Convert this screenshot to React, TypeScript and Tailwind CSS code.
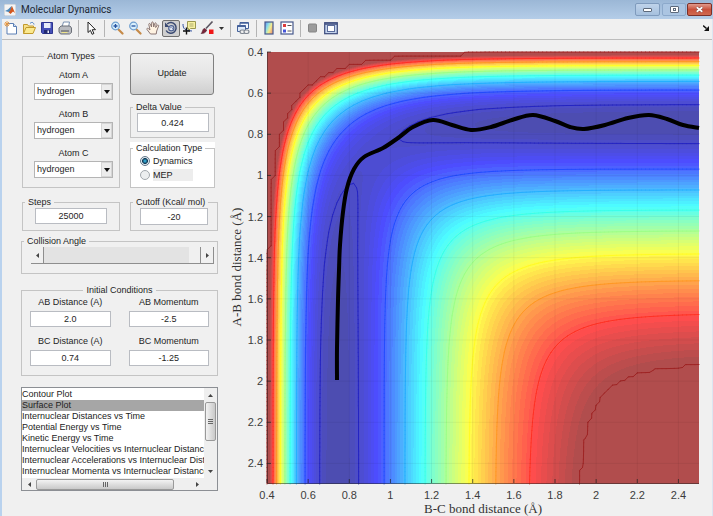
import React, { useMemo, useState } from 'react';

const ATOMS = ['hydrogen', 'deuterium', 'fluorine', 'chlorine'];

const PLOTS = [
  'Contour Plot',
  'Surface Plot',
  'Internuclear Distances vs Time',
  'Potential Energy vs Time',
  'Kinetic Energy vs Time',
  'Internuclear Velocities vs Internuclear Distance',
  'Internuclear Accelerations vs Internuclear Distance',
  'Internuclear Momenta vs Internuclear Distance',
];

// plot box in svg units
const X0 = 267;
const Y0 = 52;
const SIZE = 432;
const UNIT = SIZE / 2.1;

// LEPS surface for H + H2, kcal/mol and angstrom
const D = 109.4;
const BETA = 1.942;
const R0 = 0.7417;
const SATO = 0.19;
const CUTOFF = -21.8;

const pair = (r: number) => {
  const e = Math.exp(-BETA * (r - R0));
  const s = D * (e * e - 2 * e);
  const t = (D / 2) * (e * e + 2 * e) * ((1 - SATO) / (1 + SATO));
  return [(s + t) / 2, (s - t) / 2];
};

const energy = (bc: number, ab: number) => {
  const [q1, j1] = pair(ab);
  const [q2, j2] = pair(bc);
  const [q3, j3] = pair(ab + bc);
  const j = Math.sqrt(((j1 - j2) ** 2 + (j2 - j3) ** 2 + (j1 - j3) ** 2) / 2);
  return Math.min(CUTOFF, q1 + q2 + q3 - j);
};

const jet = (v: number, alpha: number) => {
  const t = 0.0156 + 0.969 * Math.min(1, Math.max(0, v));
  const ch = (c: number) => {
    const k = Math.min(1, Math.max(0, 1.5 - Math.abs(4 * t - c)));
    return Math.round(255 * (k * alpha + 1 - alpha));
  };
  return `rgb(${ch(3)},${ch(2)},${ch(1)})`;
};

const norm = (v: number) => (v + D) / (CUTOFF + D);

// one path per colour, made of horizontal runs
const buildBands = () => {
  const count = 64;
  const paths: string[] = Array(count).fill('');
  for (let y = 0; y < SIZE; y++) {
    let start = 0;
    let last = -1;
    for (let x = 0; x <= SIZE; x++) {
      const v = x < SIZE ? norm(energy(0.4 + (x + 0.5) / UNIT, 0.4 + (y + 0.5) / UNIT)) : -1;
      const band = x < SIZE ? Math.max(0, Math.min(count - 1, Math.floor(v * count))) : -1;
      if (band !== last) {
        if (last >= 0) paths[last] += `M${X0 + start} ${Y0 + y}h${x - start}v1h${start - x}z`;
        start = x;
        last = band;
      }
    }
  }
  return paths.map((d, i) => ({ d, fill: jet(i / (count - 1), 0.7) }));
};

const LEVELS = [-105.7, -95.4, -85, -74.7, -64.4, -54.1, -43.7, -33, CUTOFF - 0.02];

const buildLines = () => {
  const n = 105;
  const grid: number[][] = [];
  for (let j = 0; j <= n; j++) {
    grid.push([]);
    for (let i = 0; i <= n; i++) grid[j].push(energy(0.4 + i * 0.02, 0.4 + j * 0.02));
  }
  const step = SIZE / n;
  return LEVELS.map((level) => {
    let d = '';
    for (let j = 0; j < n; j++) {
      for (let i = 0; i < n; i++) {
        const corners = [
          [i, j],
          [i + 1, j],
          [i + 1, j + 1],
          [i, j + 1],
        ];
        const pts: string[] = [];
        for (let k = 0; k < 4; k++) {
          const [ax, ay] = corners[k];
          const [bx, by] = corners[(k + 1) % 4];
          const a = grid[ay][ax];
          const b = grid[by][bx];
          if (a > level !== b > level) {
            const t = (level - a) / (b - a);
            const px = X0 + (ax + (bx - ax) * t) * step;
            const py = Y0 + (ay + (by - ay) * t) * step;
            pts.push(`${px.toFixed(1)} ${py.toFixed(1)}`);
          }
        }
        if (pts.length >= 2) d += `M${pts[0]}L${pts[1]}`;
      }
    }
    return { d, stroke: jet(norm(level), 0.86) };
  });
};

const TRAJECTORY = [
  [337, 380], [337, 348], [338, 300], [339, 270], [340, 245], [343, 212], [347, 188],
  [354, 169], [364, 157], [383, 148], [398, 138], [413, 127], [433, 120],
  [452, 125], [471, 130], [491, 127], [512, 120], [533, 115],
  [555, 121], [570, 127], [584, 129], [605, 125], [628, 118], [649, 115],
  [667, 119], [683, 125], [699, 128],
];

const smooth = (p: number[][]) => {
  let d = `M${p[0][0]} ${p[0][1]}`;
  for (let i = 0; i < p.length - 1; i++) {
    const a = p[i - 1] || p[i];
    const b = p[i];
    const c = p[i + 1];
    const e = p[i + 2] || c;
    d += `C${b[0] + (c[0] - a[0]) / 6} ${b[1] + (c[1] - a[1]) / 6} ${c[0] - (e[0] - b[0]) / 6} ${c[1] - (e[1] - b[1]) / 6} ${c[0]} ${c[1]}`;
  }
  return d;
};

const TICKS = ['0.4', '0.6', '0.8', '1', '1.2', '1.4', '1.6', '1.8', '2', '2.2', '2.4'];

const SurfacePlot = () => {
  const bands = useMemo(buildBands, []);
  const lines = useMemo(buildLines, []);
  const end = X0 + SIZE;
  const bottom = Y0 + SIZE - 1;

  return (
    <svg viewBox="228 40 484 476" className="block w-full" role="img" aria-label="Potential energy surface">
      <g shapeRendering="crispEdges">
        {bands.map((b, i) => (
          <path key={i} d={b.d} fill={b.fill} />
        ))}
      </g>
      {lines.map((l, i) => (
        <path key={i} d={l.d} stroke={l.stroke} strokeWidth="1" strokeLinecap="round" fill="none" />
      ))}
      <g stroke="#000" strokeOpacity="0.05">
        {TICKS.slice(1).map((t) => {
          const o = (Number(t) - 0.4) * UNIT;
          return <path key={t} d={`M${X0 + o} ${Y0}V${bottom}M${X0} ${Y0 + o}H${end}`} />;
        })}
      </g>
      <g stroke="#222" strokeOpacity="0.7">
        <path d={`M${X0 + 0.5} ${Y0}V${bottom + 0.5}H${end}`} fill="none" strokeOpacity="0.5" />
        {TICKS.map((t) => {
          const o = (Number(t) - 0.4) * UNIT;
          return <path key={t} d={`M${X0 + o} ${bottom}v-4M${X0} ${Y0 + o}h4`} />;
        })}
      </g>
      <path d={smooth(TRAJECTORY)} stroke="#000" strokeWidth="4" fill="none" />
      <g className="font-['Liberation_Sans'] text-[11px]" fill="#3c3c3c">
        {TICKS.map((t) => {
          const o = (Number(t) - 0.4) * UNIT;
          return (
            <React.Fragment key={t}>
              <text x={X0 + o} y="499" textAnchor="middle">{t}</text>
              <text x="263" y={Y0 + o + 4} textAnchor="end">{t}</text>
            </React.Fragment>
          );
        })}
      </g>
      <g className="font-['Liberation_Serif'] text-[13px]" fill="#333" textAnchor="middle">
        <text x="483" y="513">B-C bond distance (Å)</text>
        <text transform="translate(241 267) rotate(-90)">A-B bond distance (Å)</text>
      </g>
    </svg>
  );
};

const ToolButton = ({ label, pressed, children }: { label: string; pressed?: boolean; children: React.ReactNode }) => (
  <button
    type="button"
    aria-label={label}
    className={
      pressed
        ? 'flex h-[17px] w-[18px] items-center justify-center rounded-[2px] border border-[#6f6f6f] bg-[#cfcfcf]'
        : 'flex h-[17px] w-[18px] items-center justify-center'
    }
  >
    <svg viewBox="0 0 14 14" className="size-[14px] shrink-0">{children}</svg>
  </button>
);

const Separator = () => (
  <div className="flex h-[17px] w-2 justify-center">
    <div className="w-px bg-[#b4b4b4]" />
  </div>
);

const Toolbar = () => (
  <div className="flex h-[21px] items-center border-b border-[#bdbdbd] bg-[#f0f0f0] pb-[2px]">
    <ToolButton label="New Figure">
      <path d="M3 2.500h6.500l3 3v7.500h-9.500z" fill="#fff" stroke="#5b7fb4" />
      <path d="M9.500 2.500v3h3" fill="#d7e4f5" stroke="#5b7fb4" />
      <path d="M3 0v6M0 3h6M1 1l4 4M5 1L1 5" stroke="#e8953a" strokeWidth="0.900" />
    </ToolButton>
    <ToolButton label="Open File">
      <path d="M1.500 12.500v-9h4l1 1.500h5v2" fill="#f7e08a" stroke="#c29a2c" />
      <path d="M1.500 12.500l2.500-6h9.500l-2.500 6z" fill="#fbe98e" stroke="#c29a2c" />
      <path d="M8 2.500c2-2 3.500-1 4 1" fill="none" stroke="#4a7fc0" />
    </ToolButton>
    <ToolButton label="Save Figure">
      <path d="M1.500 1.500h11v11h-10l-1-1z" fill="#4550b8" stroke="#2d3590" />
      <path d="M4 2h6.500v5H4z" fill="#e8edfa" />
      <path d="M4 9h6v3.500H4z" fill="#222a70" />
      <path d="M7.500 9.500h1.500v2.500H7.500z" fill="#e8edfa" />
    </ToolButton>
    <ToolButton label="Print Figure">
      <path d="M4 6l1.500-5h6L10.500 6z" fill="#fff" stroke="#7890b0" />
      <path d="M1 7l2-2h9l1.500 2v4.500l-2 1.500H2.500L1 11z" fill="#b9bbc0" stroke="#6c7078" />
      <path d="M3 10h8" stroke="#555" />
      <path d="M3.500 11.500h6" stroke="#eee58a" />
    </ToolButton>
    <Separator />
    <ToolButton label="Edit Plot">
      <path d="M4 1v10.500l2.400-2.200 1.700 4 1.800-.8-1.700-3.800H11.500z" fill="#fff" stroke="#222" />
    </ToolButton>
    <Separator />
    <ToolButton label="Zoom In">
      <path d="M8.500 8.500l4 4" stroke="#c58a48" strokeWidth="2.200" strokeLinecap="round" />
      <circle cx="5.500" cy="5" r="3.800" fill="#d8effc" stroke="#6f9fd0" strokeWidth="1.200" />
      <path d="M3.500 5h4M5.500 3v4" stroke="#2552a0" strokeWidth="1.300" />
    </ToolButton>
    <ToolButton label="Zoom Out">
      <path d="M8.500 8.500l4 4" stroke="#c58a48" strokeWidth="2.200" strokeLinecap="round" />
      <circle cx="5.500" cy="5" r="3.800" fill="#d8effc" stroke="#6f9fd0" strokeWidth="1.200" />
      <path d="M3.500 5h4" stroke="#2552a0" strokeWidth="1.300" />
    </ToolButton>
    <ToolButton label="Pan">
      <path
        d="M4.500 13L1 8.500c-.6-1 .5-1.700 1.300-1L4 9 2.800 3.500c-.2-1.100 1.200-1.500 1.600-.3L5.500 6 5.700 1.800c0-1.200 1.500-1.200 1.600 0L7.700 6l1-3.500c.3-1.100 1.700-.8 1.500.3L9.700 6.500l1.500-2.200c.6-.9 1.800-.2 1.400.8L10.700 10l-.5 3z"
        fill="#fff3e2"
        stroke="#806a68"
        strokeWidth="0.900"
      />
    </ToolButton>
    <ToolButton label="Rotate 3D" pressed>
      <path d="M3.200 3A5.300 5.300 0 1 1 2.200 9.500" fill="none" stroke="#3a4a72" strokeWidth="1.500" />
      <path d="M1 1.500v4.500h4.500z" fill="#3a4a72" />
      <circle cx="7.300" cy="7.200" r="2.600" fill="#e3eaf6" stroke="#4d6292" strokeWidth="1.200" />
      <path d="M6 7l1.300-.8 1.300.8v1.200" fill="none" stroke="#4d6292" strokeWidth="0.700" />
    </ToolButton>
    <ToolButton label="Data Cursor">
      <path d="M5.500.5h8v7h-5l-2 2v-2h-1z" fill="#f7f0a0" stroke="#9b9750" />
      <path d="M7.500 3h4M7.500 5h4" stroke="#8c8c60" strokeWidth="0.700" />
      <path d="M1 3c0 5 2 6.500 9 7" fill="none" stroke="#3050a0" />
      <path d="M4.500 6.500v7M1 10h7" stroke="#111" strokeWidth="1.400" />
    </ToolButton>
    <ToolButton label="Brush">
      <path d="M12.500.5L6 7.500" stroke="#5a5560" strokeWidth="1.600" />
      <path d="M1 12.500c1.500-1 1.200-4 3.200-5.200L6.800 9C6 11.500 3.500 13 1 12.500z" fill="#7a2438" stroke="#4a2030" strokeWidth="0.500" />
      <path d="M9 8.500h4.500V13H9z" fill="#f01818" />
    </ToolButton>
    <button type="button" aria-label="Brush Options" className="flex h-[17px] w-[10px] items-center justify-center">
      <svg viewBox="0 0 5 3" className="h-[3px] w-[5px]"><path d="M0 0h5L2.500 3z" fill="#333" /></svg>
    </button>
    <Separator />
    <ToolButton label="Link Plot">
      <path d="M4 1.500h8.500v6H4z" fill="#f4f8ff" stroke="#44619a" />
      <path d="M1.500 4.500h8v6h-8z" fill="#dce8f8" stroke="#44619a" />
      <path d="M1.500 4.500h8v1.500h-8zM4 1.500h8.500v1.200H4z" fill="#44619a" />
      <rect x="4" y="9" width="5" height="3.500" rx="1.700" fill="#eee" stroke="#7d8590" strokeWidth="1.200" />
      <rect x="8" y="9" width="5" height="3.500" rx="1.700" fill="#eee" stroke="#7d8590" strokeWidth="1.200" />
    </ToolButton>
    <Separator />
    <ToolButton label="Insert Colorbar">
      <defs>
        <linearGradient id="bar" x1="0" y1="0" x2="1" y2="0.600">
          <stop offset="0" stopColor="#5f8ff0" />
          <stop offset="0.400" stopColor="#8ee0e8" />
          <stop offset="0.700" stopColor="#f3ec8c" />
          <stop offset="1" stopColor="#f0a878" />
        </linearGradient>
      </defs>
      <rect x="3" y="1" width="8" height="12" fill="url(#bar)" stroke="#46598c" strokeWidth="1.200" />
    </ToolButton>
    <ToolButton label="Insert Legend">
      <rect x="1" y="1" width="12" height="12" fill="#fff" stroke="#46598c" strokeWidth="1.200" />
      <path d="M3 3h3v3H3z" fill="#dc3c3c" />
      <path d="M3 8.500h3v3H3z" fill="#4554d8" />
      <path d="M7.500 4.500h4M7.500 10h4" stroke="#555" />
    </ToolButton>
    <Separator />
    <ToolButton label="Hide Plot Tools">
      <rect x="2.500" y="3" width="8" height="8" rx="1" fill="#9b9b9b" stroke="#858585" />
    </ToolButton>
    <ToolButton label="Show Plot Tools">
      <rect x="0.700" y="1.700" width="12.600" height="11" fill="#c4d3ec" stroke="#3b4a7c" strokeWidth="1.200" />
      <path d="M1 3h12" stroke="#3b4a7c" strokeWidth="1.500" />
      <rect x="3.500" y="4.500" width="7" height="6" fill="#fff" stroke="#5a6c9c" />
    </ToolButton>
    <button type="button" aria-label="Dock Figure" className="mr-[2px] ml-auto flex h-[17px] w-2 items-center justify-center">
      <svg viewBox="0 0 6 6" className="size-[6px]">
        <path d="M0 .5l3.500 3" stroke="#111" strokeWidth="1.500" />
        <path d="M6 1v5H1z" fill="#111" />
      </svg>
    </button>
  </div>
);

const TitleBar = () => (
  <header className="flex h-[19px] items-center bg-linear-to-b from-[#9bb7d6] to-[#b4cde8] pl-1">
    <svg viewBox="0 0 12 12" className="size-3">
      <rect width="12" height="12" fill="#f4f4f4" stroke="#8a9bb0" strokeWidth="0.600" />
      <path d="M1 7l3-1.500L6.500 3 8 2 6 9 4.500 8z" fill="#4a86b8" />
      <path d="M8 2l3 7-2-1.500L6.500 10 4.500 8C6.500 7.500 7 4 8 2z" fill="#d4561c" />
    </svg>
    <h1 className="ml-[5px] font-['Roboto'] text-[10px] leading-4 text-[#1c2733]">Molecular Dynamics</h1>
    <div className="mr-px ml-auto flex items-center">
      <button type="button" aria-label="Minimize" className="mr-[2px] flex h-[13px] w-[25px] items-center justify-center rounded-[2px] border border-[#7f9bbd] bg-linear-to-b from-[#bfd3ea] to-[#a5c0de]">
        <span className="h-[4px] w-[9px] rounded-[1px] border border-[#5d6a7c] bg-white" />
      </button>
      <button type="button" aria-label="Maximize" className="mr-px flex h-[13px] w-[24px] items-center justify-center rounded-[2px] border border-[#8ca9cb] bg-[#abc5e2]">
        <span className="flex h-[7px] w-[9px] items-center justify-center rounded-[1px] border border-[#5d6a7c] bg-white">
          <span className="h-[3px] w-[3px] border border-[#5d6a7c]" />
        </span>
      </button>
      <button type="button" aria-label="Close" className="flex h-[13px] w-[25px] items-center justify-center rounded-[2px] border border-[#7c3028] bg-linear-to-b from-[#e09a8c] via-[#c9513c] to-[#cf6a50]">
        <svg viewBox="0 0 8 6" className="h-[7px] w-[9px]">
          <path d="M1.500 1l5 4M6.500 1l-5 4" stroke="#6d3a38" strokeWidth="2.400" />
          <path d="M1.500 1l5 4M6.500 1l-5 4" stroke="#fff" strokeWidth="1.500" />
        </svg>
      </button>
    </div>
  </header>
);

const Panel = ({ title, center, className = '', children }: { title: string; center?: boolean; className?: string; children: React.ReactNode }) => (
  <fieldset className={`min-w-0 border border-[#c4c4c4] ${className}`}>
    <legend className={center ? 'mx-auto px-[3px] leading-3' : 'ml-[2px] px-[3px] leading-3'}>{title}</legend>
    {children}
  </fieldset>
);

const NumberBox = ({ label, value, className }: { label: string; value: string; className: string }) => (
  <input
    type="text"
    aria-label={label}
    defaultValue={value}
    className={`block border border-[#b9bcc2] bg-white text-center outline-none ${className}`}
  />
);

const AtomSelect = ({ name }: { name: string }) => (
  <div className="flex flex-col gap-[2px]">
    <label htmlFor={name} className="text-center leading-3">{`Atom ${name}`}</label>
    <div className="relative">
      <select id={name} className="block h-[17px] w-full appearance-none border border-[#b4b4b4] bg-white pl-[2px] outline-none">
        {ATOMS.map((a) => (
          <option key={a}>{a}</option>
        ))}
      </select>
      <span className="pointer-events-none absolute inset-y-px right-px flex w-[11px] items-center justify-center border border-[#d5d5d5] bg-[#ececec]">
        <svg viewBox="0 0 6 4" className="h-1 w-[6px] shrink-0"><path d="M0 0h6L3 4z" fill="#111" /></svg>
      </span>
    </div>
  </div>
);

const CalcRadio = ({ label, checked, onChange }: { label: string; checked: boolean; onChange: () => void }) => (
  <label className="flex h-[14px] items-center gap-[3px]">
    <input
      type="radio"
      name="calculation"
      checked={checked}
      onChange={onChange}
      className="size-[10px] appearance-none rounded-full border border-[#a3a8ad] bg-[#eceeef] checked:border-[#63788a] checked:bg-[radial-gradient(circle,#38c6f4_0,#143c58_45%,#dfe9ef_60%)]"
    />
    <span className={checked ? 'leading-3' : 'w-[40px] bg-[#ededed] leading-3'}>{label}</span>
  </label>
);

const Arrow = ({ d }: { d: string }) => (
  <svg viewBox="0 0 5 5" className="size-[5px] shrink-0"><path d={d} fill="#444" /></svg>
);

const Field = ({ label, value }: { label: string; value: string }) => (
  <label className="flex flex-col gap-[3px]">
    <span className="text-center leading-3">{label}</span>
    <NumberBox label={label} value={value} className="h-[16px] w-full" />
  </label>
);

const Controls = () => {
  const [mode, setMode] = useState('Dynamics');

  return (
    <aside className="flex w-[226px] shrink-0 flex-col pt-[10px] pr-[10px] pl-[19px]">
      <div className="flex justify-between pr-[2px] pl-px">
        <Panel title="Atom Types" center className="h-[138px] w-[98px]">
          <div className="flex flex-col gap-2 pt-[7px] pr-[6px] pl-[11px]">
            <AtomSelect name="A" />
            <AtomSelect name="B" />
            <AtomSelect name="C" />
          </div>
        </Panel>
        <div className="flex w-[86px] flex-col">
          <button type="button" className="mt-[3px] h-[42px] w-[84px] rounded-[3px] border border-[#808080] bg-linear-to-b from-[#f0f0f0] via-[#e6e6e6] to-[#cfcfcf]">
            Update
          </button>
          <Panel title="Delta Value" className="mt-[6px] h-[37px] w-[85px]">
            <NumberBox label="Delta Value" value="0.424" className="mx-auto h-[19px] w-[72px]" />
          </Panel>
          <div className="mt-1 w-[85px] bg-white">
            <Panel title="Calculation Type" className="h-[46px]">
              <div className="pl-[9px]">
                {['Dynamics', 'MEP'].map((m) => (
                  <CalcRadio key={m} label={m} checked={mode === m} onChange={() => setMode(m)} />
                ))}
              </div>
            </Panel>
          </div>
        </div>
      </div>
      <div className="mt-2 flex justify-between pl-px">
        <Panel title="Steps" className="h-[35px] w-[98px]">
          <NumberBox label="Steps" value="25000" className="mx-auto h-[16px] w-[72px]" />
        </Panel>
        <Panel title="Cutoff (Kcal/ mol)" className="h-[35px] w-[88px]">
          <NumberBox label="Cutoff" value="-20" className="mx-auto h-[17px] w-[68px]" />
        </Panel>
      </div>
      <Panel title="Collision Angle" className="mt-1 h-[39px]">
        <div className="ml-[9px] flex h-[17px] w-[183px] border-b border-[#8e8e8e] bg-[#e3e3e3]">
          <button type="button" aria-label="Decrease" className="flex w-[13px] items-center justify-center border-r border-[#8e8e8e] bg-[#f0f0f0]">
            <Arrow d="M4 0v5L1 2.500z" />
          </button>
          <input
            type="range"
            aria-label="Collision Angle"
            defaultValue="100"
            className="h-4 min-w-0 flex-1 appearance-none bg-[#e3e3e3] [&::-webkit-slider-thumb]:h-4 [&::-webkit-slider-thumb]:w-3 [&::-webkit-slider-thumb]:appearance-none [&::-webkit-slider-thumb]:border-r [&::-webkit-slider-thumb]:border-[#8e8e8e] [&::-webkit-slider-thumb]:bg-[#f0f0f0]"
          />
          <button type="button" aria-label="Increase" className="flex w-[13px] items-center justify-center border-r border-[#8e8e8e] bg-[#f0f0f0]">
            <Arrow d="M1 0v5l3-2.500z" />
          </button>
        </div>
      </Panel>
      <Panel title="Initial Conditions" center className="mt-[10px] h-[92px]">
        <div className="grid grid-cols-2 gap-x-[18px] gap-y-2 px-2">
          <Field label="AB Distance (A)" value="2.0" />
          <Field label="AB Momentum" value="-2.5" />
          <Field label="BC Distance (A)" value="0.74" />
          <Field label="BC Momentum" value="-1.25" />
        </div>
      </Panel>
      <div className="mt-[11px] grid h-[104px] grid-cols-[1fr_13px] grid-rows-[1fr_12px] border border-[#8c8f94] bg-white">
        <select size={8} aria-label="Plot type" defaultValue="Surface Plot" className="h-[90px] w-full min-w-0 appearance-none overflow-hidden bg-none pt-px outline-none">
          {PLOTS.map((p) => (
            <option key={p} className="h-[11px] min-h-0 p-0 leading-[11px] text-[#222] checked:bg-[linear-gradient(#a6a6a6,#a6a6a6)]">{p}</option>
          ))}
        </select>
        <div className="flex flex-col items-center justify-between bg-[#efefef]">
          <span className="flex h-[14px] items-center"><Arrow d="M0 4h5L2.500 1z" /></span>
          <span className="mb-auto flex h-[39px] w-[11px] flex-col items-center justify-center gap-px rounded-[2px] border border-[#999] bg-linear-to-r from-[#f3f3f3] to-[#c9c9c9]">
            <span className="h-px w-[5px] bg-[#666]" />
            <span className="h-px w-[5px] bg-[#666]" />
            <span className="h-px w-[5px] bg-[#666]" />
          </span>
          <span className="flex h-[14px] items-center"><Arrow d="M0 1h5L2.500 4z" /></span>
        </div>
        <div className="flex items-center bg-[#efefef]">
          <span className="flex w-[14px] justify-center"><Arrow d="M4 0v5L1 2.500z" /></span>
          <span className="mr-auto flex h-[11px] w-[138px] items-center justify-center gap-px rounded-[2px] border border-[#999] bg-linear-to-b from-[#f3f3f3] to-[#c9c9c9]">
            <span className="h-[5px] w-px bg-[#666]" />
            <span className="h-[5px] w-px bg-[#666]" />
            <span className="h-[5px] w-px bg-[#666]" />
          </span>
          <span className="flex w-[14px] justify-center"><Arrow d="M1 0v5l3-2.500z" /></span>
        </div>
        <div className="bg-[#efefef]" />
      </div>
    </aside>
  );
};

export default function App() {
  return (
    <div className="min-h-screen bg-[#f0f0f0] font-['Liberation_Sans',sans-serif] text-[9px] text-[#1e1e1e]">
      <TitleBar />
      <div className="border-r border-l-2 border-r-[#dbe6f2] border-l-[#b9d2ee]">
        <Toolbar />
        <div className="flex items-start">
          <Controls />
          <main className="min-w-0 flex-1">
            <SurfacePlot />
          </main>
        </div>
      </div>
    </div>
  );
}
